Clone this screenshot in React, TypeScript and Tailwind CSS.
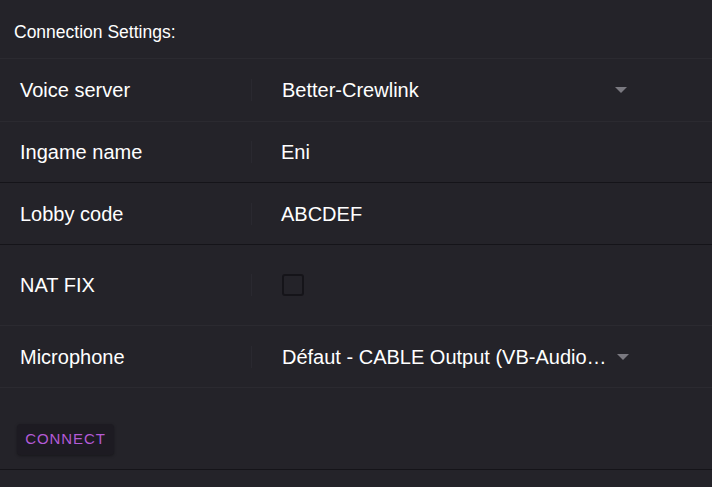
import React from 'react'

const rows = [
  { label: 'Voice server', kind: 'select', value: 'Better-Crewlink', h: 'h-[63px]', border: 'border-[#2b2a30]' },
  { label: 'Ingame name', kind: 'text', value: 'Eni', h: 'h-[61px]', border: 'border-[#151419]' },
  { label: 'Lobby code', kind: 'text', value: 'ABCDEF', h: 'h-[62px]', border: 'border-[#151419]' },
  { label: 'NAT FIX', kind: 'check', value: '', h: 'h-[81px]', border: 'border-[#2b2a30]' },
  { label: 'Microphone', kind: 'select', value: 'Défaut - CABLE Output (VB-Audio…', h: 'h-[62px]', border: 'border-[#2b2a30]' },
]

function Arrow() {
  return (
    <svg width="12" height="6" viewBox="0 0 12 6" className="shrink-0">
      <path d="M0 0h12L6 6z" fill="#7a7980" />
    </svg>
  )
}

export default function App() {
  return (
    <div
      className="w-[712px] h-[487px] bg-[#242329] text-white overflow-hidden"
      style={{ fontFamily: '"Liberation Sans", Arial, sans-serif' }}
    >
      <div className="h-[59px] border-b border-[#2b2a30] pl-[14px] pt-[19px] text-[17.5px]">
        Connection Settings:
      </div>
      {rows.map((row) => (
        <div key={row.label} className={`${row.h} flex items-center border-b ${row.border}`}>
          <div className="w-[251px] pl-[20px] text-[20px]">{row.label}</div>
          <div className="w-px h-[22px] bg-[#2a2930]" />
          <div className="flex-1 pl-[30px] text-[20px]">
            {row.kind === 'select' && (
              <div className="w-[345px] flex items-center gap-[10px]">
                <span className="flex-1 whitespace-nowrap">{row.value}</span>
                <Arrow />
              </div>
            )}
            {row.kind === 'text' && <span className="-ml-px">{row.value}</span>}
            {row.kind === 'check' && (
              <div className="w-[22px] h-[22px] rounded-[3px] border-2 border-[#151419]" />
            )}
          </div>
        </div>
      ))}
      <div className="h-[82px] border-b border-[#151419] pl-[17px] pt-[36px]">
        <button className="w-[97px] h-[31px] rounded-[4px] bg-[#1d1b22] shadow-[0_1px_3px_rgba(0,0,0,0.35)] text-[15px] tracking-[0.06em] text-[#b35ad6]">
          CONNECT
        </button>
      </div>
    </div>
  )
}
